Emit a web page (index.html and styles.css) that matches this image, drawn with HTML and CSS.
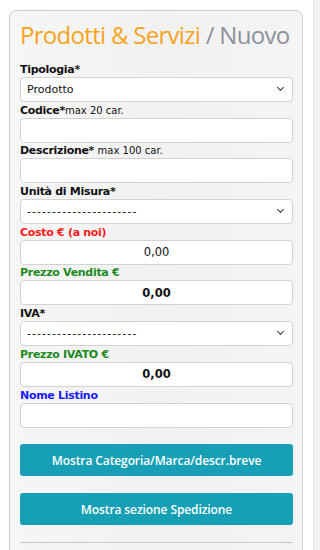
FILE: index.html
```html
<!DOCTYPE html>
<html lang="it">
<head>
<meta charset="utf-8">
<title>Prodotti &amp; Servizi / Nuovo</title>
<link rel="stylesheet" href="styles.css">
</head>
<body>
<div class="layout">
  <div class="panel">
    <h1 class="title"><span class="t-main">Prodotti &amp; Servizi</span> <span class="t-sub">/ Nuovo</span></h1>

    <div class="field">
      <label class="lbl">Tipologia*</label>
      <div class="sel"><select class="ctl"><option>Prodotto</option></select></div>
    </div>
    <div class="field">
      <label class="lbl">Codice*<span class="hint">max 20 car.</span></label>
      <input class="ctl" type="text">
    </div>
    <div class="field">
      <label class="lbl">Descrizione* <span class="hint">max 100 car.</span></label>
      <input class="ctl" type="text">
    </div>
    <div class="field">
      <label class="lbl">Unità di Misura*</label>
      <div class="sel"><select class="ctl dash"><option>----------------------</option></select></div>
    </div>
    <div class="field">
      <label class="lbl red">Costo € (a noi)</label>
      <input class="ctl num" type="text" value="0,00">
    </div>
    <div class="field">
      <label class="lbl green">Prezzo Vendita €</label>
      <input class="ctl num bold" type="text" value="0,00">
    </div>
    <div class="field">
      <label class="lbl">IVA*</label>
      <div class="sel"><select class="ctl dash"><option>----------------------</option></select></div>
    </div>
    <div class="field">
      <label class="lbl green">Prezzo IVATO €</label>
      <input class="ctl num bold" type="text" value="0,00">
    </div>
    <div class="field">
      <label class="lbl blue">Nome Listino</label>
      <input class="ctl" type="text">
    </div>

    <button class="btn btn-first">Mostra Categoria/Marca/descr.breve</button>
    <button class="btn">Mostra sezione Spedizione</button>
    <hr class="sep">
  </div>
  <div class="side"></div>
</div>
</body>
</html>
```

FILE: styles.css
```css
html, body {
  margin: 0;
  padding: 0;
  background: #ffffff;
  overflow: hidden;
  height: 550px;
}

.layout {
  display: flex;
  align-items: flex-start;
  padding-left: 9px;
  padding-top: 10px;
}

.panel {
  box-sizing: border-box;
  width: 295px;
  min-height: 600px;
  border: 1px solid #cfcfcf;
  border-radius: 7px;
  background: linear-gradient(90deg, #f6f6f6 0%, #f1f1f1 50%, #f4f4f4 100%);
  padding: 8px 9px 0 10px;
  display: flex;
  flex-direction: column;
}

.side {
  margin-left: 10px;
  margin-top: -10px;
  width: 6px;
  height: 560px;
  background: #f2f2f2;
  border-left: 1px solid #e4e4e4;
}

.title {
  margin: 0 0 12px 0;
  font-family: "Open Sans", sans-serif;
  font-weight: 400;
  font-size: 24px;
  line-height: 32px;
  letter-spacing: -0.7px;
  white-space: nowrap;
}

.t-main { color: #f8a31c; }
.t-sub { color: #8b929b; }

.field {
  display: flex;
  flex-direction: column;
  margin-bottom: 1.7px;
}

.lbl {
  font-family: "DejaVu Sans", Verdana, sans-serif;
  font-weight: 700;
  font-size: 11px;
  letter-spacing: -0.3px;
  line-height: 14px;
  height: 14px;
  color: #111111;
  white-space: nowrap;
}

.hint {
  font-weight: 400;
  font-size: 10px;
  letter-spacing: 0;
}

.red { color: #ff1a1a; }
.green { color: #1b8a1b; }
.blue { color: #1a1aff; }

.ctl {
  box-sizing: border-box;
  width: 100%;
  height: 25px;
  margin: 0;
  border: 1px solid #d2d2d2;
  border-radius: 4px;
  background: #ffffff;
  font-family: "DejaVu Sans", Verdana, sans-serif;
  font-size: 11px;
  color: #111111;
  padding: 0 6px;
  outline: none;
}

select.ctl {
  appearance: none;
  -webkit-appearance: none;
  padding-right: 24px;
}

select.dash {
  letter-spacing: 1.05px;
}

.sel {
  position: relative;
}

.sel::after {
  content: "";
  position: absolute;
  right: 10px;
  top: 8px;
  width: 4px;
  height: 4px;
  border-right: 1.6px solid #333;
  border-bottom: 1.6px solid #333;
  transform: rotate(45deg);
  pointer-events: none;
}

.num {
  text-align: center;
  font-size: 11.5px;
}

.bold {
  font-weight: 700;
}

.btn {
  box-sizing: border-box;
  width: 100%;
  height: 32px;
  margin: 0 0 17px 0;
  border: none;
  border-radius: 3px;
  background: #17a0b5;
  color: #ffffff;
  font-family: "Open Sans", sans-serif;
  font-weight: 600;
  font-size: 12px;
  letter-spacing: -0.1px;
  padding: 0;
}

.btn-first {
  margin-top: 15.3px;
}

.sep {
  width: 100%;
  margin: 0;
  border: none;
  border-top: 1px solid #c8c8c8;
  height: 0;
}
```
